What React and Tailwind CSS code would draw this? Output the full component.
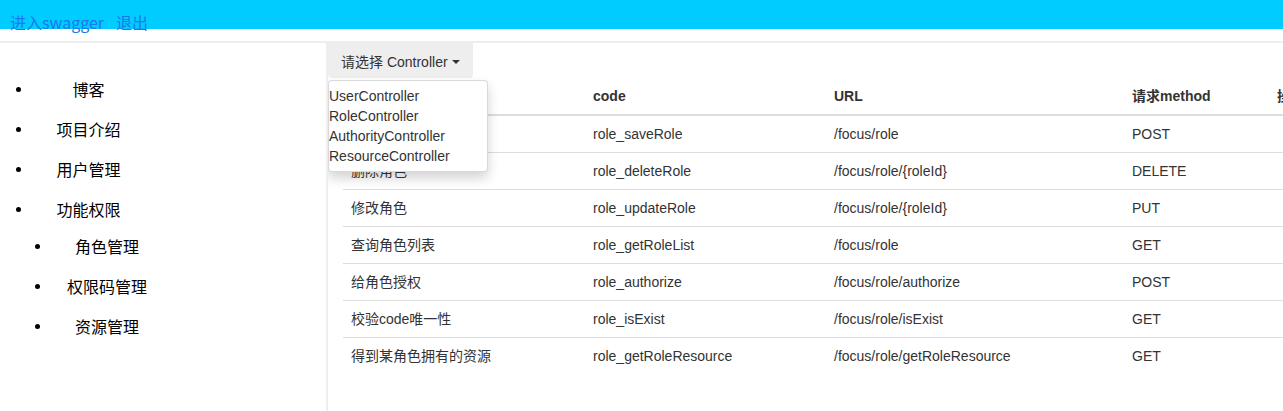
import React from "react";

const rows = [
  ["新增角色", "role_saveRole", "/focus/role", "POST"],
  ["删除角色", "role_deleteRole", "/focus/role/{roleId}", "DELETE"],
  ["修改角色", "role_updateRole", "/focus/role/{roleId}", "PUT"],
  ["查询角色列表", "role_getRoleList", "/focus/role", "GET"],
  ["给角色授权", "role_authorize", "/focus/role/authorize", "POST"],
  ["校验code唯一性", "role_isExist", "/focus/role/isExist", "GET"],
  ["得到某角色拥有的资源", "role_getRoleResource", "/focus/role/getRoleResource", "GET"],
];

function TopItem({ children }) {
  return (
    <li className="flex items-center h-10">
      <span className="ml-4 w-[5px] h-[5px] rounded-full bg-black shrink-0" />
      <span className="w-[135px] text-center">{children}</span>
    </li>
  );
}

function SubItem({ children }) {
  return (
    <li className="flex items-center h-10">
      <span className="ml-[35px] w-[5px] h-[5px] rounded-full bg-black shrink-0" />
      <span className="w-[134px] text-center">{children}</span>
    </li>
  );
}

export default function App() {
  return (
    <div className="h-screen w-full flex flex-col overflow-hidden bg-white">
      <div className="h-[29px] bg-[#00ccff] shrink-0 relative">
        <div className="pt-[12px] pl-[10px] text-[16px] leading-[20px] text-[#1a78ec] flex gap-[12px] [font-family:'Noto_Sans_CJK_SC','Liberation_Sans',sans-serif]">
          <span>进入swagger</span>
          <span>退出</span>
        </div>
      </div>
      <div className="h-[12px] shrink-0" />
      <div className="h-[2px] bg-[#eeeeee] shrink-0" />
      <div className="flex flex-1 min-h-0">
        <aside className="w-[328px] shrink-0 border-r-2 border-[#eeeeee] text-[16px] text-black [font-family:'Noto_Sans_CJK_SC',sans-serif]">
          <ul className="pt-[26px]">
            <TopItem>博客</TopItem>
            <TopItem>项目介绍</TopItem>
            <TopItem>用户管理</TopItem>
            <li>
              <div className="flex items-center h-10">
                <span className="ml-4 w-[5px] h-[5px] rounded-full bg-black shrink-0" />
                <span className="w-[135px] text-center">功能权限</span>
              </div>
              <ul className="-mt-[3px]">
                <SubItem>角色管理</SubItem>
                <SubItem>权限码管理</SubItem>
                <SubItem>资源管理</SubItem>
              </ul>
            </li>
          </ul>
        </aside>
        <main className="flex-1 min-w-0 overflow-hidden relative text-[14px] text-[#333333] [font-family:'Liberation_Sans','Noto_Sans_CJK_SC',sans-serif]">
          <div className="relative inline-block">
            <button className="flex items-center gap-[4px] h-[35px] pt-[3px] px-[13px] bg-[#eeeeee] rounded-b-[4px] text-[14px] text-[#333333] leading-[20px]">
              <span>请选择 Controller</span>
              <span className="w-0 h-0 border-l-[4px] border-r-[4px] border-t-[4px] border-l-transparent border-r-transparent border-t-[#333333]" />
            </button>
            <div className="absolute left-0 top-[37px] w-[160px] bg-white border border-[rgba(0,0,0,0.15)] rounded-[4px] shadow-[0_6px_12px_rgba(0,0,0,0.175)] py-[5px] z-10 leading-[20px]">
              <div>UserController</div>
              <div>RoleController</div>
              <div>AuthorityController</div>
              <div>ResourceController</div>
            </div>
          </div>
          <table className="ml-[15px] table-fixed border-collapse w-[1150px] leading-[20px]">
            <colgroup>
              <col className="w-[242px]" />
              <col className="w-[241px]" />
              <col className="w-[298px]" />
              <col className="w-[145px]" />
              <col className="w-[224px]" />
            </colgroup>
            <thead>
              <tr>
                <th className="text-left font-bold px-2 py-2 border-b-2 border-[#dddddd] whitespace-nowrap">名称</th>
                <th className="text-left font-bold px-2 py-2 border-b-2 border-[#dddddd] whitespace-nowrap">code</th>
                <th className="text-left font-bold px-2 py-2 border-b-2 border-[#dddddd] whitespace-nowrap">URL</th>
                <th className="text-left font-bold px-2 py-2 border-b-2 border-[#dddddd] whitespace-nowrap">请求method</th>
                <th className="text-left font-bold px-2 py-2 border-b-2 border-[#dddddd] whitespace-nowrap">操作</th>
              </tr>
            </thead>
            <tbody>
              {rows.map((r, i) => (
                <tr key={i}>
                  {r.map((c, j) => (
                    <td key={j} className={`px-2 py-2 whitespace-nowrap ${i > 0 ? "border-t border-[#dddddd]" : ""}`}>
                      {c}
                    </td>
                  ))}
                  <td className={`px-2 py-2 ${i > 0 ? "border-t border-[#dddddd]" : ""}`} />
                </tr>
              ))}
            </tbody>
          </table>
        </main>
      </div>
    </div>
  );
}
